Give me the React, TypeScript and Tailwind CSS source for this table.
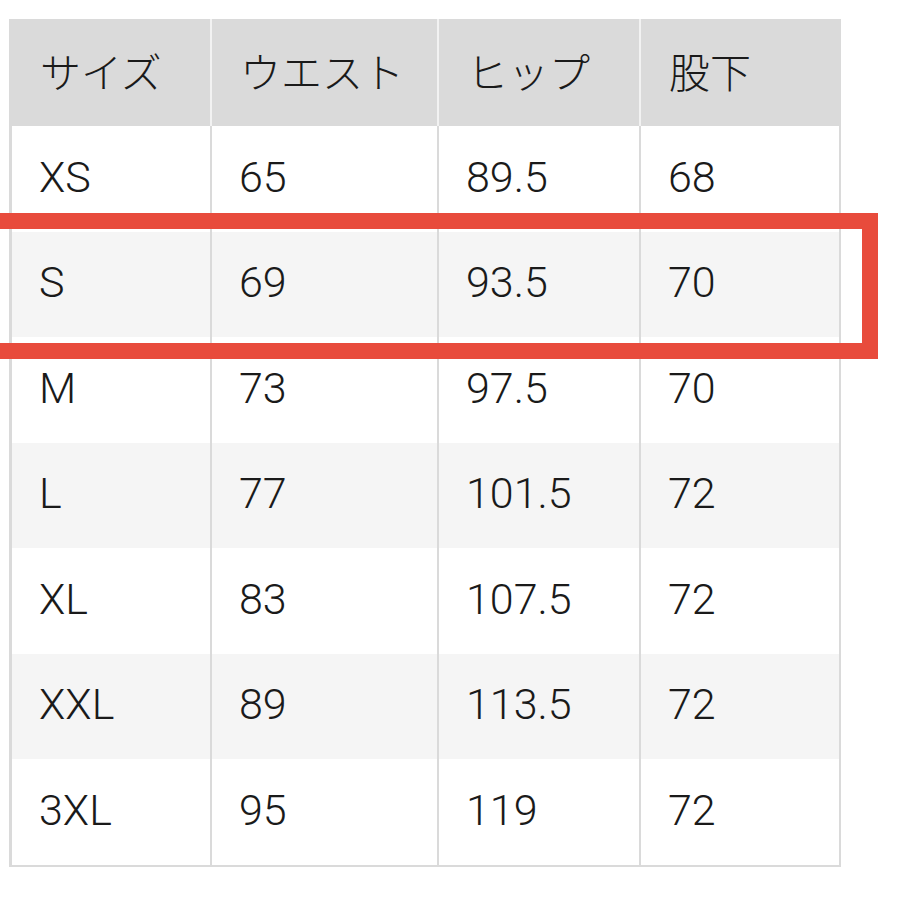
import React from "react";

const headers = ["サイズ", "ウエスト", "ヒップ", "股下"];
const rows = [
  ["XS", "65", "89.5", "68"],
  ["S", "69", "93.5", "70"],
  ["M", "73", "97.5", "70"],
  ["L", "77", "101.5", "72"],
  ["XL", "83", "107.5", "72"],
  ["XXL", "89", "113.5", "72"],
  ["3XL", "95", "119", "72"],
];

export default function App() {
  return (
    <div className="relative w-[900px] h-[900px] bg-white overflow-hidden pt-[19px] pl-[9px]" style={{ fontFamily: 'Roboto, "Noto Sans CJK JP", sans-serif', fontWeight: 300 }}>
      <div className="w-[832px] border-l-[3px] border-b-2 border-r-2 border-[#dadada] text-[#1a1a1a]">
        <div className="grid grid-cols-[200px_227px_202px_1fr] h-[107px] bg-[#dadada]">
          {headers.map((h, i) => (
            <div key={h} className={`flex items-center pl-[28px] pb-[4px] text-[41px] leading-none ${i < 3 ? "border-r-2 border-[#f2f2f2]" : ""}`} style={{ fontFamily: '"Noto Sans CJK JP", sans-serif' }}>
              {h}
            </div>
          ))}
        </div>
        {rows.map((r, ri) => (
          <div key={r[0]} className={`grid grid-cols-[200px_227px_202px_1fr] h-[105.5px] ${ri % 2 === 1 ? "bg-[#f5f5f5]" : "bg-white"}`}>
            {r.map((c, i) => (
              <div key={i} className={`flex items-center pl-[27px] pb-[3px] text-[43px] leading-none ${i < 3 ? "border-r-2 border-[#dadada]" : ""}`}>
                {c}
              </div>
            ))}
          </div>
        ))}
      </div>
      <div className="absolute left-[-20px] top-[213px] w-[898px] h-[146px] border-[16px] border-[#e84b3c]" />
    </div>
  );
}
